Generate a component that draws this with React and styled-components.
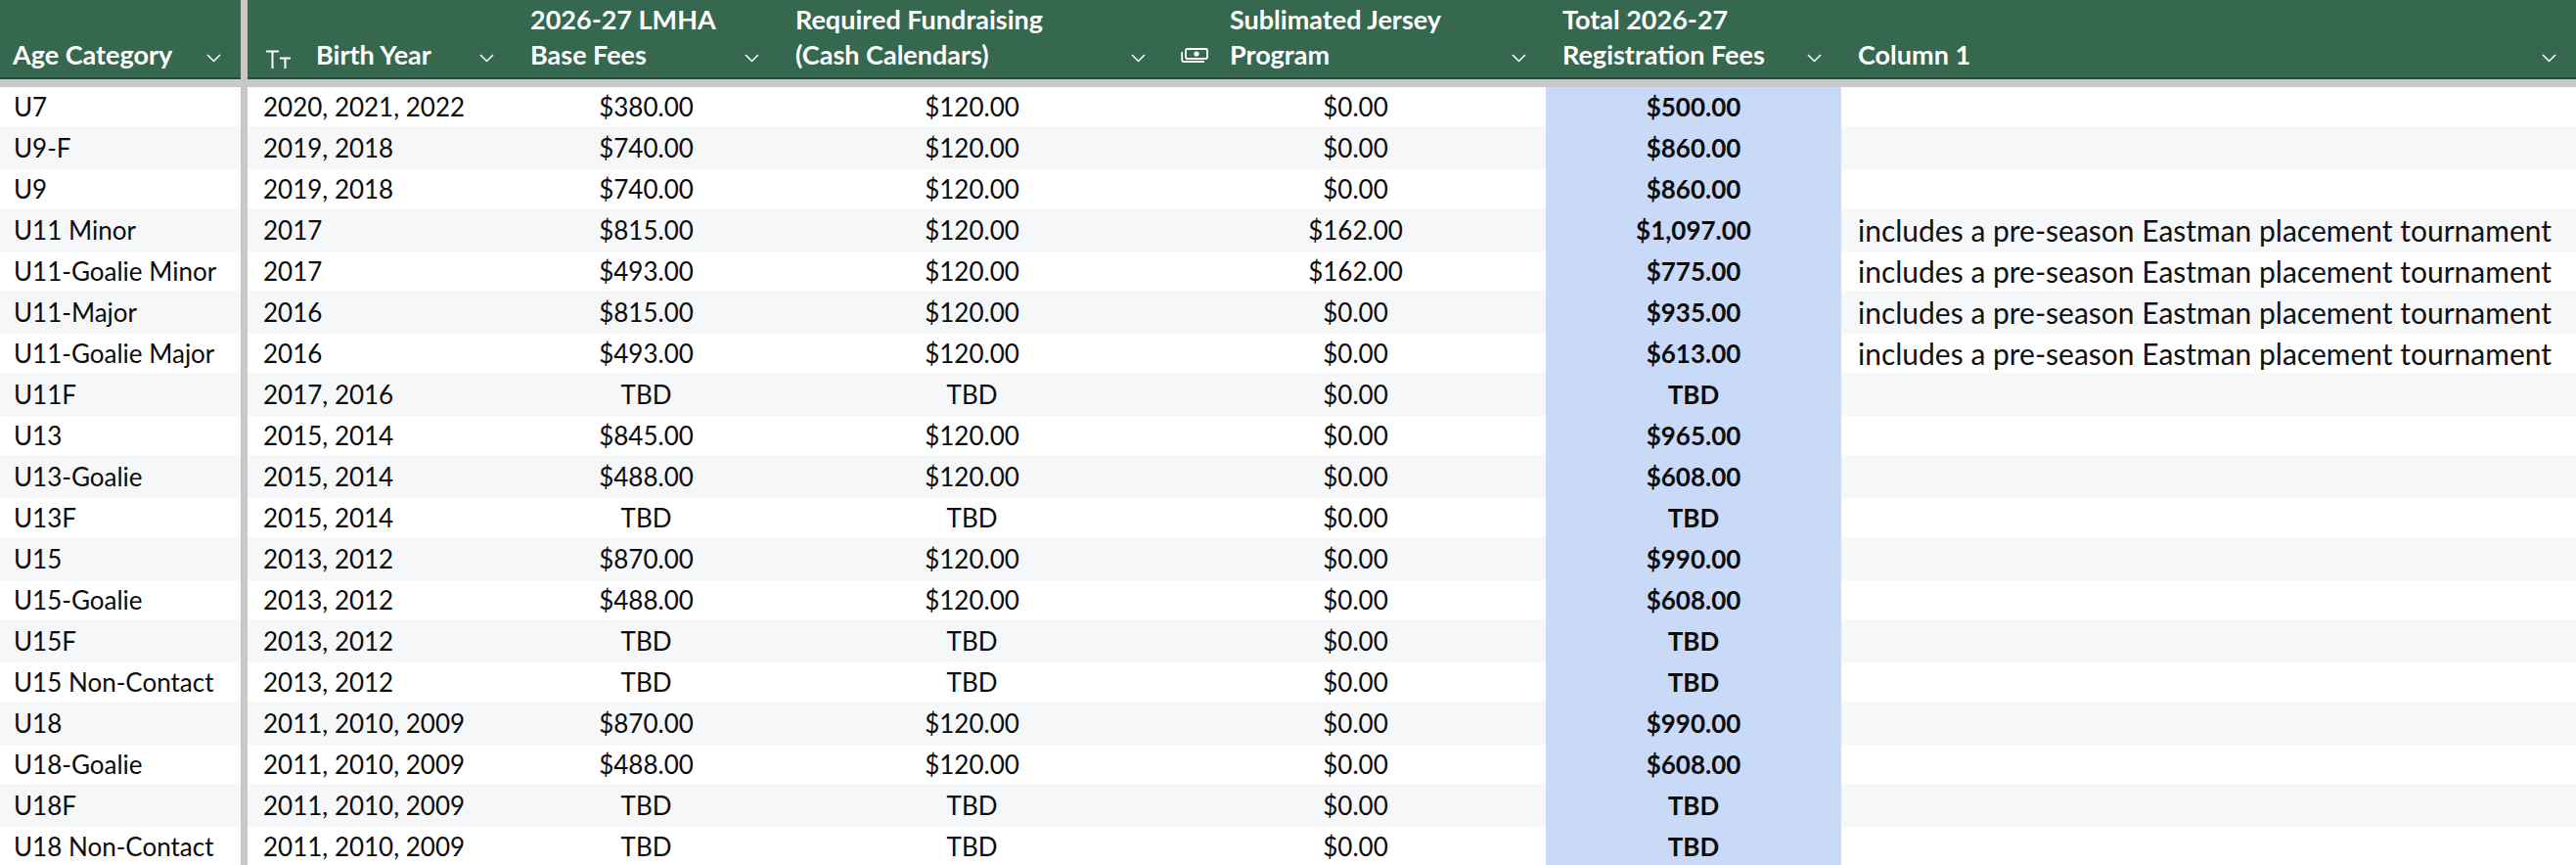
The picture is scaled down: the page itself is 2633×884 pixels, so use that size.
import React from "react";
import styled, { createGlobalStyle } from "styled-components";

const GlobalStyle = createGlobalStyle`
  html, body {
    margin: 0;
    padding: 0;
    background: #ffffff;
    overflow: hidden;
  }
  body {
    font-family: "Lato", "Noto Sans", sans-serif;
  }
`;

const COLUMNS = "246px 7px 272px 271px 395px 389px 302px 1fr";

const NOTE = "includes a pre-season Eastman placement tournament";

const rows = [
  ["U7", "2020, 2021, 2022", "$380.00", "$120.00", "$0.00", "$500.00", ""],
  ["U9-F", "2019, 2018", "$740.00", "$120.00", "$0.00", "$860.00", ""],
  ["U9", "2019, 2018", "$740.00", "$120.00", "$0.00", "$860.00", ""],
  ["U11 Minor", "2017", "$815.00", "$120.00", "$162.00", "$1,097.00", NOTE],
  ["U11-Goalie Minor", "2017", "$493.00", "$120.00", "$162.00", "$775.00", NOTE],
  ["U11-Major", "2016", "$815.00", "$120.00", "$0.00", "$935.00", NOTE],
  ["U11-Goalie Major", "2016", "$493.00", "$120.00", "$0.00", "$613.00", NOTE],
  ["U11F", "2017, 2016", "TBD", "TBD", "$0.00", "TBD", ""],
  ["U13", "2015, 2014", "$845.00", "$120.00", "$0.00", "$965.00", ""],
  ["U13-Goalie", "2015, 2014", "$488.00", "$120.00", "$0.00", "$608.00", ""],
  ["U13F", "2015, 2014", "TBD", "TBD", "$0.00", "TBD", ""],
  ["U15", "2013, 2012", "$870.00", "$120.00", "$0.00", "$990.00", ""],
  ["U15-Goalie", "2013, 2012", "$488.00", "$120.00", "$0.00", "$608.00", ""],
  ["U15F", "2013, 2012", "TBD", "TBD", "$0.00", "TBD", ""],
  ["U15 Non-Contact", "2013, 2012", "TBD", "TBD", "$0.00", "TBD", ""],
  ["U18", "2011, 2010, 2009", "$870.00", "$120.00", "$0.00", "$990.00", ""],
  ["U18-Goalie", "2011, 2010, 2009", "$488.00", "$120.00", "$0.00", "$608.00", ""],
  ["U18F", "2011, 2010, 2009", "TBD", "TBD", "$0.00", "TBD", ""],
  ["U18 Non-Contact", "2011, 2010, 2009", "TBD", "TBD", "$0.00", "TBD", ""],
];

// icons
const Chevron = () => (
  <svg width="15" height="9" viewBox="0 0 15 9">
    <path d="M1 1l6.5 6.5L14 1" stroke="#fff" strokeWidth="1.5" fill="none" />
  </svg>
);

const TextIcon = () => (
  <svg width="26" height="19" viewBox="0 0 26 19">
    <path d="M0 1.5h13M6.5 1.5V19M14 8.5h11M19.5 8.5V19" stroke="#fff" strokeWidth="2" fill="none" />
  </svg>
);

const MoneyIcon = () => (
  <svg width="28" height="15" viewBox="0 0 28 15">
    <rect x="5" y="1" width="22" height="10" rx="1.5" stroke="#fff" strokeWidth="1.8" fill="none" />
    <circle cx="16" cy="6" r="2.6" fill="#fff" />
    <path d="M1.2 4v8.6c0 .8.6 1.4 1.4 1.4H24" stroke="#fff" strokeWidth="1.8" fill="none" />
  </svg>
);

const Sheet = styled.div`
  width: 2633px;
  height: 884px;
  overflow: hidden;
  background: #ffffff;
`;

const HeaderRow = styled.div`
  display: grid;
  grid-template-columns: ${COLUMNS};
  height: 81px;
`;

const HeadCell = styled.div`
  display: flex;
  align-items: flex-end;
  box-sizing: border-box;
  height: 81px;
  padding: 0 20px 5px ${(p) => p.$pad || 17}px;
  background: #35684f;
  border-bottom: 2px solid #24493a;
  color: #ffffff;
`;

const HeadIcon = styled.span`
  display: flex;
  margin: 0 ${(p) => p.$gap}px ${(p) => p.$drop}px 0;
`;

const HeadLabel = styled.div`
  flex: 1;
  font-size: 27px;
  font-weight: 700;
  line-height: 36px;
  white-space: nowrap;
`;

const HeadChevron = styled.span`
  display: flex;
  margin-bottom: 10px;
`;

const Divider = styled.div`
  background: #c8c8c8;
`;

const Band = styled.div`
  height: 8px;
  background: #c8c8c8;
`;

const Row = styled.div`
  display: grid;
  grid-template-columns: ${COLUMNS};
  height: ${(p) => (p.$alt ? 44 : 40)}px;
  background: ${(p) => (p.$alt ? "#f6f7f9" : "#ffffff")};
`;

const Cell = styled.div`
  display: flex;
  align-items: center;
  justify-content: ${(p) => (p.$center ? "center" : "flex-start")};
  padding-left: ${(p) => (p.$center ? 0 : p.$pad || 16)}px;
  font-size: 26px;
  font-weight: ${(p) => (p.$bold ? 700 : 400)};
  color: #0c0c0c;
  white-space: nowrap;
  overflow: hidden;
  background: ${(p) => (p.$total ? "#c9daf8" : "transparent")};
`;

const NoteCell = styled(Cell)`
  font-size: 30px;
  padding-left: 17px;
  color: #111111;
`;

const headers = [
  { label: ["Age Category"], pad: 13 },
  null,
  { label: ["Birth Year"], pad: 19, icon: <TextIcon />, gap: 25, drop: 4 },
  { label: ["2026-27 LMHA", "Base Fees"] },
  { label: ["Required Fundraising", "(Cash Calendars)"] },
  { label: ["Sublimated Jersey", "Program"], pad: 16, icon: <MoneyIcon />, gap: 22, drop: 10 },
  { label: ["Total 2026-27", "Registration Fees"] },
  { label: ["Column 1"] },
];

export default function App() {
  return (
    <Sheet>
      <GlobalStyle />
      <HeaderRow>
        {headers.map((h, i) =>
          h === null ? (
            <Divider key={i} />
          ) : (
            <HeadCell key={i} $pad={h.pad}>
              {h.icon && (
                <HeadIcon $gap={h.gap} $drop={h.drop}>
                  {h.icon}
                </HeadIcon>
              )}
              <HeadLabel>
                {h.label.map((line) => (
                  <div key={line}>{line}</div>
                ))}
              </HeadLabel>
              <HeadChevron>
                <Chevron />
              </HeadChevron>
            </HeadCell>
          )
        )}
      </HeaderRow>
      <Band />
      {rows.map((r, i) => (
        <Row key={r[0]} $alt={i % 2 === 1}>
          <Cell $pad={14}>{r[0]}</Cell>
          <Divider />
          <Cell>{r[1]}</Cell>
          <Cell $center>{r[2]}</Cell>
          <Cell $center>{r[3]}</Cell>
          <Cell $center>{r[4]}</Cell>
          <Cell $center $bold $total>
            {r[5]}
          </Cell>
          <NoteCell>{r[6]}</NoteCell>
        </Row>
      ))}
    </Sheet>
  );
}
